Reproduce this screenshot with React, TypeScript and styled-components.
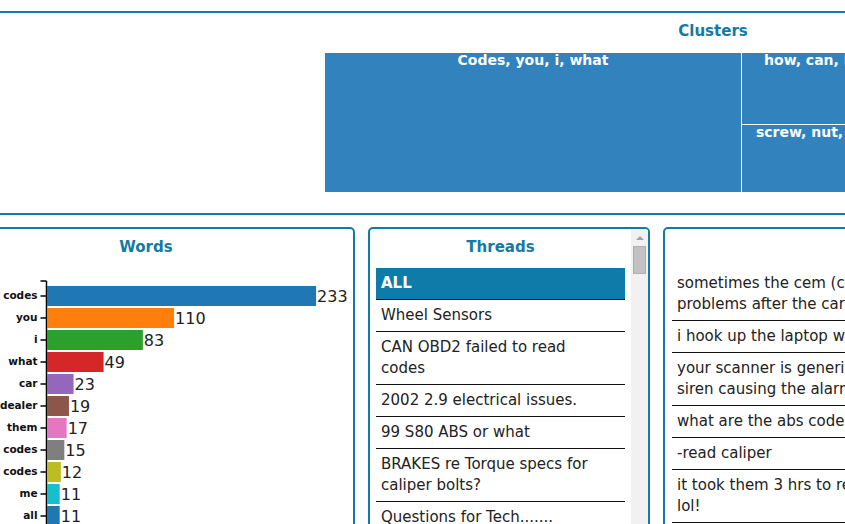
import React from 'react';
import styled, { createGlobalStyle } from 'styled-components';

const BRAND = '#137aa6';

const GlobalStyle = createGlobalStyle`
  html, body {
    margin: 0;
    padding: 0;
    background: #fff;
    overflow: hidden;
  }
  body {
    font-family: "DejaVu Sans", "Liberation Sans", sans-serif;
    color: #222;
  }
`;

const Viewport = styled.div`
  width: 845px;
  height: 524px;
  overflow: hidden;
`;

// the page is scrolled sideways, so it starts left of the window
const Page = styled.div`
  width: 1552px;
  margin-left: -63px;
  padding-top: 11px;
  display: flex;
  flex-direction: column;
  gap: 12px;
`;

const Panel = styled.section`
  border: 2px solid ${BRAND};
  border-radius: 5px;
  background: #fff;
  box-sizing: border-box;
`;

const TopPanel = styled(Panel)`
  padding-bottom: 21px;
`;

const PanelTitle = styled.h2`
  margin: 0;
  padding-top: 8px;
  text-align: center;
  color: ${BRAND};
  font-size: 15px;
  font-weight: bold;
  line-height: 20px;
  min-height: 20px;
`;

const Treemap = styled.div`
  width: 776px;
  height: 139px;
  margin: 12px auto 0;
  display: grid;
  grid-template-columns: 416px 214px 1fr;
  gap: 1px;
  background: #fff;
`;

const TreeColumn = styled.div<{ $rows: string }>`
  display: grid;
  grid-template-rows: ${(p) => p.$rows};
  gap: 1px;
`;

const TreeCell = styled.div`
  background: #3182bd;
  color: #fff;
  font-size: 14px;
  font-weight: bold;
  line-height: 15px;
  text-align: center;
  white-space: nowrap;
  overflow: hidden;
`;

const BottomRow = styled.div`
  display: flex;
  gap: 13px;
  height: 320px;
`;

const WordsPanel = styled(Panel)`
  width: 418px;
  flex: none;
  overflow: hidden;
`;

const ThreadsPanel = styled(Panel)`
  width: 282px;
  flex: none;
  display: flex;
  overflow: hidden;
`;

const PostsPanel = styled(Panel)`
  flex: 1;
  overflow: hidden;
`;

const PanelBody = styled.div`
  flex: 1;
  min-width: 0;
`;

const List = styled.ul<{ $inset: number }>`
  list-style: none;
  margin: 11px ${(p) => p.$inset}px 0;
  padding: 0;
`;

const Row = styled.li<{ $active?: boolean }>`
  padding: 5px 20px 5px 5px;
  font-size: 15px;
  line-height: 21px;
  border-bottom: 1px solid #111;
  background: ${(p) => (p.$active ? '#0f7ba9' : 'transparent')};
  color: ${(p) => (p.$active ? '#fff' : '#222')};
  font-weight: ${(p) => (p.$active ? 'bold' : 'normal')};
`;

const PostRow = styled(Row)`
  white-space: pre;
`;

const Scrollbar = styled.div`
  width: 17px;
  flex: none;
  background: #f1f1f1;
  display: flex;
  flex-direction: column;
  align-items: center;
`;

const ScrollArrow = styled.div`
  height: 17px;
  width: 17px;
  display: flex;
  align-items: center;
  justify-content: center;

  &::before {
    content: '';
    border-left: 4px solid transparent;
    border-right: 4px solid transparent;
    border-bottom: 4px solid #a3a3a3;
  }
`;

const ScrollThumb = styled.div`
  width: 11px;
  height: 26px;
  background: #c1c1c1;
  border: 1px solid #b0b0b0;
`;

const WordChart = styled.svg`
  display: block;
  margin-top: -1px;
`;

const words: [string, number][] = [
  ['codes', 233],
  ['you', 110],
  ['i', 83],
  ['what', 49],
  ['car', 23],
  ['dealer', 19],
  ['them', 17],
  ['error codes', 15],
  ['control codes', 12],
  ['me', 11],
  ['all', 11],
];

const palette = [
  '#1f77b4', '#ff7f0e', '#2ca02c', '#d62728', '#9467bd',
  '#8c564b', '#e377c2', '#7f7f7f', '#bcbd22', '#17becf',
];

const threads = [
  'Wheel Sensors',
  'CAN OBD2 failed to read codes',
  '2002 2.9 electrical issues.',
  '99 S80 ABS or what',
  'BRAKES re Torque specs for caliper bolts?',
  'Questions for Tech.......',
  'Volvo S60 ABS light',
];

const posts = [
  'sometimes the cem (central electronic module) will throw codes\nproblems after the car has been sitting for a while',
  'i hook up the laptop with vida and read all the modules',
  'your scanner is generic so it only reads engine codes\nsiren causing the alarm to go off at night',
  'what are the abs codes you are getting from the module',
  '-read caliper',
  'it took them 3 hrs to read the codes at the dealer\nlol!',
  'check the wheel sensor wiring first',
];

const AXIS_X = 107.5;
const AXIS_TOP = 25;
const STEP = 22;
const SCALE = 1.155;

const WordsChart = () => (
  <WordChart width={414} height={300}>
    <line x1={AXIS_X} x2={AXIS_X} y1={AXIS_TOP} y2={300} stroke="#000" strokeWidth={1.5} />
    <line x1={AXIS_X - 6} x2={AXIS_X} y1={AXIS_TOP} y2={AXIS_TOP} stroke="#000" strokeWidth={1.5} />
    {words.map(([word, count], i) => {
      const top = AXIS_TOP + 5 + i * STEP;
      const mid = top + 10;
      const w = count * SCALE;
      return (
        <g key={i}>
          <line x1={AXIS_X - 6} x2={AXIS_X} y1={mid} y2={mid} stroke="#000" strokeWidth={1.5} />
          <text
            x={AXIS_X - 9}
            y={mid}
            textAnchor="end"
            dominantBaseline="middle"
            fontSize={10.5}
            fontWeight="bold"
            fill="#111"
          >
            {word}
          </text>
          <rect x={AXIS_X + 0.5} y={top} width={w} height={20} fill={palette[i % palette.length]} />
          <text
            x={AXIS_X + 1.5 + w}
            y={mid + 1}
            dominantBaseline="middle"
            fontSize={16}
            fill="#222"
          >
            {count}
          </text>
        </g>
      );
    })}
  </WordChart>
);

export default function App() {
  return (
    <Viewport>
      <GlobalStyle />
      <Page>
        <TopPanel>
          <PanelTitle>Clusters</PanelTitle>
          <Treemap>
            <TreeColumn $rows="1fr">
              <TreeCell>Codes, you, i, what</TreeCell>
            </TreeColumn>
            <TreeColumn $rows="71px 1fr">
              <TreeCell>how, can, brake, fluid</TreeCell>
              <TreeCell>screw, nut, bolt, torque</TreeCell>
            </TreeColumn>
            <TreeColumn $rows="60px 1fr">
              <TreeCell>sensor, wheel</TreeCell>
              <TreeCell>light, abs</TreeCell>
            </TreeColumn>
          </Treemap>
        </TopPanel>

        <BottomRow>
          <WordsPanel>
            <PanelTitle>Words</PanelTitle>
            <WordsChart />
          </WordsPanel>

          <ThreadsPanel>
            <PanelBody>
              <PanelTitle>Threads</PanelTitle>
              <List $inset={6}>
                <Row $active>ALL</Row>
                {threads.map((t) => (
                  <Row key={t}>{t}</Row>
                ))}
              </List>
            </PanelBody>
            <Scrollbar>
              <ScrollArrow />
              <ScrollThumb />
            </Scrollbar>
          </ThreadsPanel>

          <PostsPanel>
            <PanelTitle>Posts</PanelTitle>
            <List $inset={7}>
              {posts.map((p) => (
                <PostRow key={p}>{p}</PostRow>
              ))}
            </List>
          </PostsPanel>
        </BottomRow>
      </Page>
    </Viewport>
  );
}
